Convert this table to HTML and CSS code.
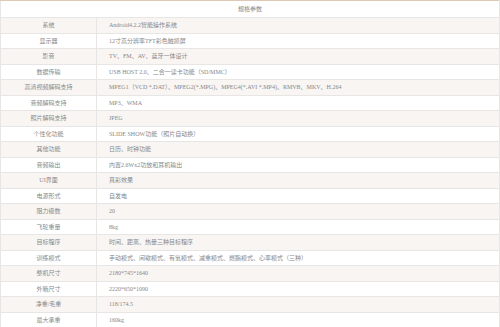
FILE: index.html
```html
<!DOCTYPE html>
<html lang="zh">
<head>
<meta charset="utf-8">
<title>规格参数</title>
<link rel="stylesheet" href="styles.css">
</head>
<body>
<table class="spec">
  <colgroup>
    <col class="col-k">
    <col class="col-v">
  </colgroup>
  <thead>
    <tr class="head"><th colspan="2">规格参数</th></tr>
  </thead>
  <tbody>
    <tr><td class="k">系统</td><td class="v">Android4.2.2智能操作系统</td></tr>
    <tr><td class="k">显示器</td><td class="v">12寸高分辨率TFT彩色触摸屏</td></tr>
    <tr><td class="k">影音</td><td class="v">TV、FM、AV、蓝牙一体设计</td></tr>
    <tr><td class="k">数据传输</td><td class="v">USB HOST 2.0、二合一读卡功能（SD/MMC）</td></tr>
    <tr><td class="k">高清视频解码支持</td><td class="v">MPEG1（VCD *.DAT）、MPEG2(*.MPG)、MPEG4(*.AVI *.MP4)、RMVB、MKV、H.264</td></tr>
    <tr><td class="k">音频解码支持</td><td class="v">MP3、WMA</td></tr>
    <tr><td class="k">照片解码支持</td><td class="v">JPEG</td></tr>
    <tr><td class="k">个性化功能</td><td class="v">SLIDE SHOW功能（照片自动换）</td></tr>
    <tr><td class="k">其他功能</td><td class="v">日历、时钟功能</td></tr>
    <tr><td class="k">音频输出</td><td class="v">内置2.6Wx2功放和耳机输出</td></tr>
    <tr><td class="k">UI界面</td><td class="v">真彩效果</td></tr>
    <tr><td class="k">电源形式</td><td class="v">自发电</td></tr>
    <tr><td class="k">阻力级数</td><td class="v">20</td></tr>
    <tr><td class="k">飞轮重量</td><td class="v">8kg</td></tr>
    <tr><td class="k">目标程序</td><td class="v">时间、距离、热量三种目标程序</td></tr>
    <tr><td class="k">训练模式</td><td class="v">手动模式、间歇模式、有氧模式、减重模式、燃脂模式、心率模式（三种）</td></tr>
    <tr><td class="k">整机尺寸</td><td class="v">2180*745*1640</td></tr>
    <tr><td class="k">外箱尺寸</td><td class="v">2220*650*1090</td></tr>
    <tr><td class="k">净重/毛重</td><td class="v">118/174.5</td></tr>
    <tr><td class="k">最大承重</td><td class="v">160kg</td></tr>
  </tbody>
</table>
</body>
</html>
```
FILE: styles.css
```css
html, body {
  margin: 0;
  padding: 0;
  background: #fff;
}
.spec {
  width: 500px;
  border-collapse: collapse;
  table-layout: fixed;
  font-family: "Liberation Serif", "Noto Sans CJK SC", serif;
  font-size: 6px;
  color: #888;
}
.col-k {
  width: 96px;
}
.spec th,
.spec td {
  border: 1px solid #e8e6e4;
  padding: 0;
  height: 15.5px;
  box-sizing: border-box;
  line-height: 14px;
  white-space: nowrap;
  overflow: hidden;
}
.spec .head th {
  height: 17px;
  font-weight: normal;
  text-align: center;
  background: #fff;
  border-top: 1.5px solid #dccab6;
}
.spec .k {
  text-align: center;
}
.spec .v {
  padding-left: 12px;
  text-align: left;
}
.spec tbody tr:nth-child(odd) td {
  background: #f9f5f3;
}
.spec tbody tr:nth-child(even) td {
  background: #fff;
}
```
